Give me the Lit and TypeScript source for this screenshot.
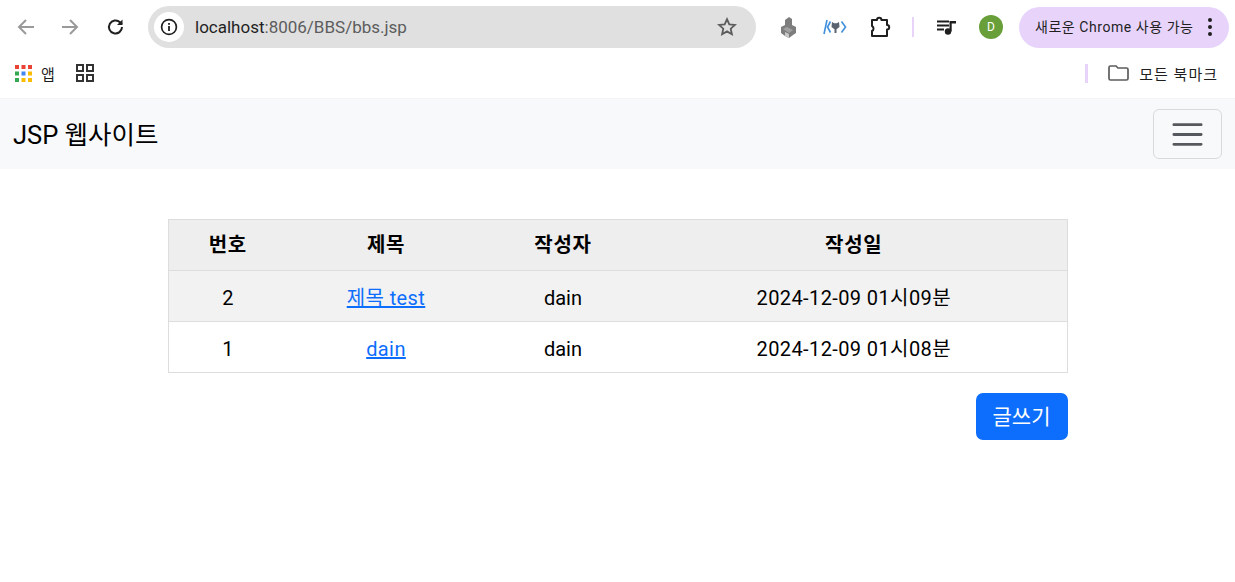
import { LitElement, html, css } from "lit";
import { customElement } from "lit/decorators.js";

const rows = [
  { n: "2", title: "제목 test", by: "dain", at: "2024-12-09 01시09분" },
  { n: "1", title: "dain", by: "dain", at: "2024-12-09 01시08분" },
];

@customElement("app-root")
export class AppRoot extends LitElement {
  static styles = css`
    :host {
      display: block;
      width: 1235px;
      height: 582px;
      overflow: hidden;
      background: #fff;
      font-family: Roboto, "Noto Sans CJK KR", sans-serif;
      color: #000;
    }
    svg { display: block; flex: none; }
    .toolbar { height: 54px; display: flex; align-items: center; }
    .cell { display: flex; align-items: center; justify-content: center; flex: none; }
    .back { width: 44px; margin-left: 4px; }
    .fwd { width: 44px; }
    .reload { width: 48px; margin-right: 8px; }
    .omni {
      width: 608px; height: 42px; background: #e0e0e0; border-radius: 21px;
      display: flex; align-items: center; padding: 0 19px 0 6px; box-sizing: border-box; flex: none;
    }
    .info {
      width: 30px; height: 30px; border-radius: 50%; background: #fff;
      display: flex; align-items: center; justify-content: center; flex: none;
    }
    .url { margin-left: 11px; font-size: 17px; color: #5c5c5c; flex: 1; white-space: nowrap; }
    .url b { font-weight: 400; color: #1f1f1f; }
    .ext1 { width: 46px; margin-left: 10px; }
    .ext2 { width: 46px; }
    .ext3 { width: 46px; }
    .sep { width: 2px; height: 20px; background: #e8d4fb; flex: none; margin-left: 8px; }
    .music { width: 46px; margin-left: 10px; }
    .avatar {
      width: 24px; height: 24px; border-radius: 50%; background: #689f38; color: #fff;
      font-size: 12px; display: flex; align-items: center; justify-content: center; flex: none; margin-left: 9px;
    }
    .pill {
      width: 210px; height: 41px; border-radius: 21px; background: #e8d4fb; margin-left: 16px;
      display: flex; align-items: center; box-sizing: border-box; padding: 0 0 0 16px; flex: none; color: #1f1f1f;
      font-size: 14px; white-space: nowrap;
    }
    .pill span { width: 159px; flex: none; letter-spacing: 0.55px; margin-bottom: 2px; }
    .dots { display: flex; flex-direction: column; gap: 3px; margin-left: 14px; }
    .dots i { width: 4px; height: 4px; border-radius: 50%; background: #1f1f1f; display: block; }
    .bookmarks {
      height: 38px; border-bottom: 1px solid #f4f4f6; display: flex; align-items: center;
      padding: 0 17px 6px 15px; font-size: 15px; color: #1f1f1f;
    }
    .apps-label { margin-left: 9px; }
    .grid-icon { margin-left: 21px; }
    .spacer { flex: 1; }
    .bm-sep { width: 3px; height: 19px; background: #e8d4fb; flex: none; margin-right: 20px; }
    .all { margin-left: 10px; white-space: nowrap; letter-spacing: 1px; }
    nav {
      height: 70px; background: #f8f9fa; display: flex; align-items: center; justify-content: space-between;
      padding: 0 13px;
    }
    .brand { font-size: 25.5px; color: #000; white-space: nowrap; margin-bottom: 3px; }
    .toggler {
      width: 69px; height: 50px; box-sizing: border-box; border: 1px solid #d9dadb; border-radius: 6px;
      display: flex; align-items: center; justify-content: center; background: transparent; padding: 0;
    }
    main { width: 900px; margin: 50px auto 0; }
    table { width: 900px; border-collapse: collapse; table-layout: fixed; font-size: 20px; line-height: 24px; }
    .c1 { width: 119px; }
    .c2 { width: 198px; }
    .c3 { width: 156px; }
    th, td { border: 1px solid #dddddd; height: 51px; padding: 0; text-align: center; box-sizing: border-box; }
    th, td { border-left: none; border-right: none; }
    th:first-child, td:first-child { border-left: 1px solid #dddddd; }
    th:last-child, td:last-child { border-right: 1px solid #dddddd; }
    th { background: #eeeeee; font-weight: 700; letter-spacing: 0.7px; }
    td { padding-top: 3px; }
    tbody tr:nth-child(odd) td { background: #f2f2f2; }
    a { color: #0d6efd; text-decoration: underline; letter-spacing: 0.4px; }
    .when { letter-spacing: 0.4px; }
    .actions { display: flex; justify-content: flex-end; margin-top: 20px; }
    .write {
      width: 92px; height: 47px; border: none; border-radius: 7px; background: #0d6efd; color: #fff;
      font: inherit; font-size: 21px; padding: 0 0 3px;
    }
  `;

  render() {
    return html`
      <div class="toolbar">
        <div class="cell back"><svg width="20" height="20" viewBox="0 0 20 20" fill="none" stroke="#9a9a9a" stroke-width="2"><path d="M18 10H3M10 3l-7 7 7 7"/></svg></div>
        <div class="cell fwd"><svg width="20" height="20" viewBox="0 0 20 20" fill="none" stroke="#9a9a9a" stroke-width="2"><path d="M2 10h15M10 3l7 7-7 7"/></svg></div>
        <div class="cell reload"><svg width="20" height="20" viewBox="0 0 20 20" fill="none" stroke="#1f1f1f" stroke-width="2"><path d="M16 10a6.500 6.500 0 1 1-2-4.700L16 7"/><path d="M16.500 2.500V8h-5.500" fill="#1f1f1f" stroke="none"/></svg></div>
        <div class="omni">
          <div class="info"><svg width="18" height="18" viewBox="0 0 18 18"><circle cx="9" cy="9" r="7.400" fill="none" stroke="#1f1f1f" stroke-width="1.700"/><rect x="8.100" y="8" width="1.800" height="5" fill="#1f1f1f"/><rect x="8.100" y="5" width="1.800" height="1.800" fill="#1f1f1f"/></svg></div>
          <div class="url"><b>localhost</b>:8006/BBS/bbs.jsp</div>
          <svg width="20" height="20" viewBox="0 0 20 20" fill="none" stroke="#5c5c5c" stroke-width="1.800"><path d="M10 2.200l2.300 5.200 5.600.5-4.200 3.800 1.200 5.600L10 14.400l-4.900 2.900 1.200-5.600L2.100 7.900l5.600-.5z"/></svg>
        </div>
        <div class="cell ext1"><svg width="18" height="22" viewBox="0 0 18 22"><path d="M5 4l4-3 3 2v6l4 2v6l-3 2-4 3-4-2-4-3v-6l4-2z" fill="#7d7d7d"/><path d="M3 13l4-2 6 3-4 3z" fill="#a0a0a0"/><path d="M5 16l4 2v4l-4-2z" fill="#c8c8c8"/></svg></div>
        <div class="cell ext2"><svg width="24" height="16" viewBox="0 0 24 16" fill="none"><path d="M4 1L1 15M7.500 2.500L4.500 8l3 5.500M18.500 2.500L22.500 8l-4 5.500" stroke="#3f8fdc" stroke-width="1.600"/><path d="M9 3l2.200 1.300h2.600L16 3l.5 5-3 2.200V14h-2v-3.800L8.500 8z" fill="#5a6470"/></svg></div>
        <div class="cell ext3"><svg width="22" height="22" viewBox="0 0 22 22" fill="none" stroke="#1f1f1f" stroke-width="2" stroke-linejoin="round"><path d="M2 4h5a2.200 2.200 0 0 1 4.400 0H17v5a2.200 2.200 0 0 1 0 4.400V20H2v-5a2.800 2.800 0 0 0 0-5z"/></svg></div>
        <div class="sep"></div>
        <div class="cell music"><svg width="20" height="18" viewBox="0 0 20 18" fill="#1f1f1f"><rect x="0" y="2.500" width="12" height="2"/><rect x="0" y="6.500" width="12" height="2"/><rect x="0" y="10.500" width="7" height="2"/><circle cx="11" cy="13.500" r="3.200"/><path d="M12.500 3h6.500v2.400h-4.300V13.500h-2.200z"/></svg></div>
        <div class="avatar">D</div>
        <div class="pill"><span>새로운 Chrome 사용 가능</span><div class="dots"><i></i><i></i><i></i></div></div>
      </div>
      <div class="bookmarks">
        <svg width="17" height="17" viewBox="0 0 17 17">
          <rect x="0" y="0" width="4" height="4" fill="#ea4335"/><rect x="6.500" y="0" width="4" height="4" fill="#ea4335"/><rect x="13" y="0" width="4" height="4" fill="#ea4335"/>
          <rect x="0" y="6.500" width="4" height="4" fill="#34a853"/><rect x="6.500" y="6.500" width="4" height="4" fill="#4285f4"/><rect x="13" y="6.500" width="4" height="4" fill="#fbbc04"/>
          <rect x="0" y="13" width="4" height="4" fill="#34a853"/><rect x="6.500" y="13" width="4" height="4" fill="#fbbc04"/><rect x="13" y="13" width="4" height="4" fill="#fbbc04"/>
        </svg>
        <span class="apps-label">앱</span>
        <svg class="grid-icon" width="18" height="18" viewBox="0 0 18 18" fill="none" stroke="#333" stroke-width="2"><rect x="1" y="1" width="6" height="6"/><rect x="11" y="1" width="6" height="6"/><rect x="1" y="11" width="6" height="6"/><rect x="11" y="11" width="6" height="6"/></svg>
        <div class="spacer"></div>
        <div class="bm-sep"></div>
        <svg width="21" height="16" viewBox="0 0 21 16" fill="none" stroke="#5c5c5c" stroke-width="1.700"><path d="M1 2.500A1.500 1.500 0 0 1 2.500 1H8l2 2h8.500A1.500 1.500 0 0 1 20 4.500v9a1.500 1.500 0 0 1-1.500 1.500h-16A1.500 1.500 0 0 1 1 13.500z"/></svg>
        <span class="all">모든 북마크</span>
      </div>
      <nav>
        <span class="brand">JSP 웹사이트</span>
        <button class="toggler" aria-label="메뉴"><svg width="37" height="37" viewBox="0 0 30 30"><path d="M4 7h22M4 15h22M4 23h22" stroke="#55585c" stroke-width="2.400" stroke-linecap="round"/></svg></button>
      </nav>
      <main>
        <table>
          <colgroup><col class="c1"/><col class="c2"/><col class="c3"/><col/></colgroup>
          <thead><tr><th>번호</th><th>제목</th><th>작성자</th><th>작성일</th></tr></thead>
          <tbody>
            ${rows.map((r) => html`<tr><td>${r.n}</td><td><a href="#">${r.title}</a></td><td>${r.by}</td><td class="when">${r.at}</td></tr>`)}
          </tbody>
        </table>
        <div class="actions"><button class="write">글쓰기</button></div>
      </main>
    `;
  }
}
